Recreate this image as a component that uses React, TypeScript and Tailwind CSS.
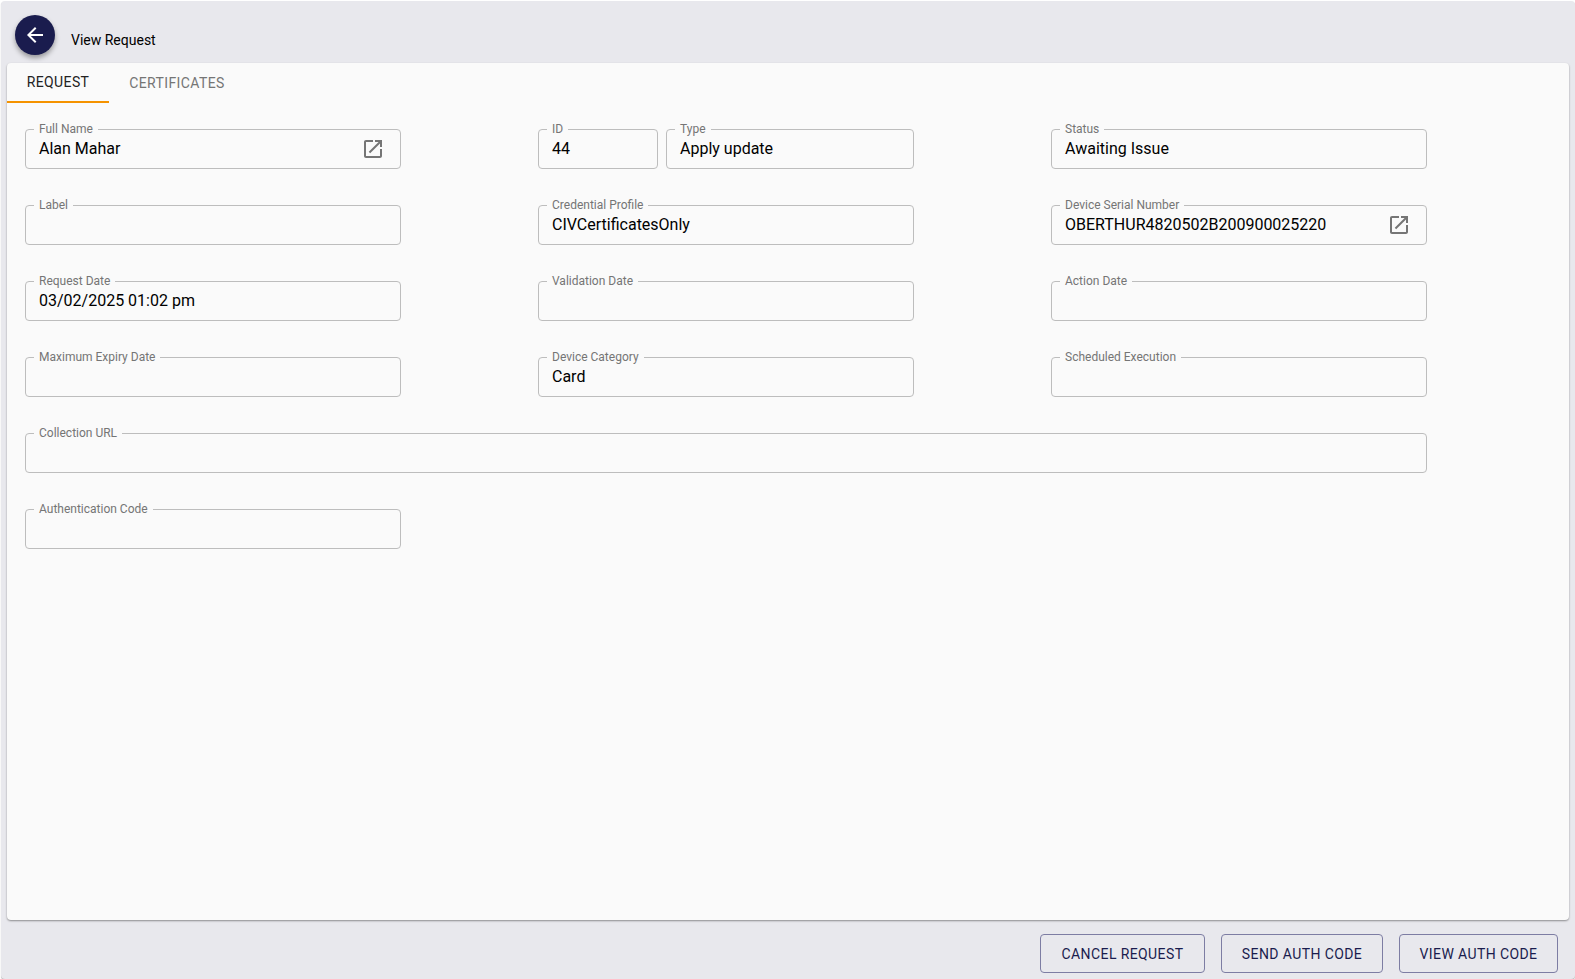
import React from "react";

function OpenIcon() {
  return (
    <svg viewBox="0 0 24 24" className="w-6 h-6 fill-[#757575]">
      <path d="M19 19H5V5h7V3H5c-1.11 0-2 .9-2 2v14c0 1.1.89 2 2 2h14c1.1 0 2-.9 2-2v-7h-2v7zM14 3v2h3.59l-9.83 9.83 1.41 1.41L19 6.41V10h2V3h-7z" />
    </svg>
  );
}

function Field({ label, value, icon, className = "" }: { label: string; value?: string; icon?: boolean; className?: string }) {
  return (
    <div className={`relative h-10 rounded border border-[#bdbdbd] flex items-center pl-[13px] ${className}`}>
      <span className="absolute left-2 -top-[8px] bg-[#fafafa] px-[5px] text-xs leading-[14px] text-[#757575]">{label}</span>
      <span className="text-base leading-6 text-black whitespace-nowrap">{value}</span>
      {icon && (
        <span className="absolute right-[15px] top-[7px]">
          <OpenIcon />
        </span>
      )}
    </div>
  );
}

function ActionButton({ children, w }: { children: string; w: string }) {
  return (
    <button className={`h-[39px] ${w} rounded border border-[#7d7da3] text-sm tracking-[0.4px] text-[#1a1c4e] flex items-center justify-center`}>
      {children}
    </button>
  );
}

export default function App() {
  return (
    <div className="w-[1575px] h-[979px] overflow-hidden bg-white font-['Roboto',sans-serif]">
      <div className="h-[978px] ml-px mt-px rounded bg-[#e8e8ed] flex flex-col shadow-[0_1px_1px_rgba(0,0,0,0.3)]">
        <header className="h-[62px] flex items-start pl-[14px] pt-[14px]">
          <button className="w-10 h-10 rounded-full bg-[#1a1c4e] shadow-[0_3px_5px_rgba(0,0,0,0.35)] flex items-center justify-center">
            <svg viewBox="0 0 24 24" className="w-6 h-6 fill-white">
              <path d="M20 11H7.83l5.59-5.59L12 4l-8 8 8 8 1.41-1.41L7.83 13H20v-2z" />
            </svg>
          </button>
          <h1 className="ml-4 mt-[15px] text-sm leading-5 text-black">View Request</h1>
        </header>
        <main className="mx-[6px] h-[857px] rounded bg-[#fafafa] shadow-[0_1px_2px_rgba(0,0,0,0.4)]">
          <nav className="flex h-10 text-sm tracking-[0.4px]">
            <div className="w-[102px] h-10 flex items-center justify-center border-b-2 border-[#f59300] text-[#222]">REQUEST</div>
            <div className="w-[136px] h-10 flex items-center justify-center text-[#757575]">CERTIFICATES</div>
          </nav>
          <div className="grid grid-cols-[376px_376px_376px] gap-x-[137px] gap-y-9 pl-[18px] pt-[26px]">
            <Field label="Full Name" value="Alan Mahar" icon />
            <div className="flex gap-2">
              <Field label="ID" value="44" className="w-[120px]" />
              <Field label="Type" value="Apply update" className="flex-1" />
            </div>
            <Field label="Status" value="Awaiting Issue" />
            <Field label="Label" />
            <Field label="Credential Profile" value="CIVCertificatesOnly" />
            <Field label="Device Serial Number" value="OBERTHUR4820502B200900025220" icon />
            <Field label="Request Date" value="03/02/2025 01:02 pm" />
            <Field label="Validation Date" />
            <Field label="Action Date" />
            <Field label="Maximum Expiry Date" />
            <Field label="Device Category" value="Card" />
            <Field label="Scheduled Execution" />
            <Field label="Collection URL" className="col-span-3" />
            <Field label="Authentication Code" />
          </div>
        </main>
        <footer className="flex justify-end gap-4 pr-[17px] pt-[14px]">
          <ActionButton w="w-[165px]">CANCEL REQUEST</ActionButton>
          <ActionButton w="w-[162px]">SEND AUTH CODE</ActionButton>
          <ActionButton w="w-[159px]">VIEW AUTH CODE</ActionButton>
        </footer>
      </div>
    </div>
  );
}
